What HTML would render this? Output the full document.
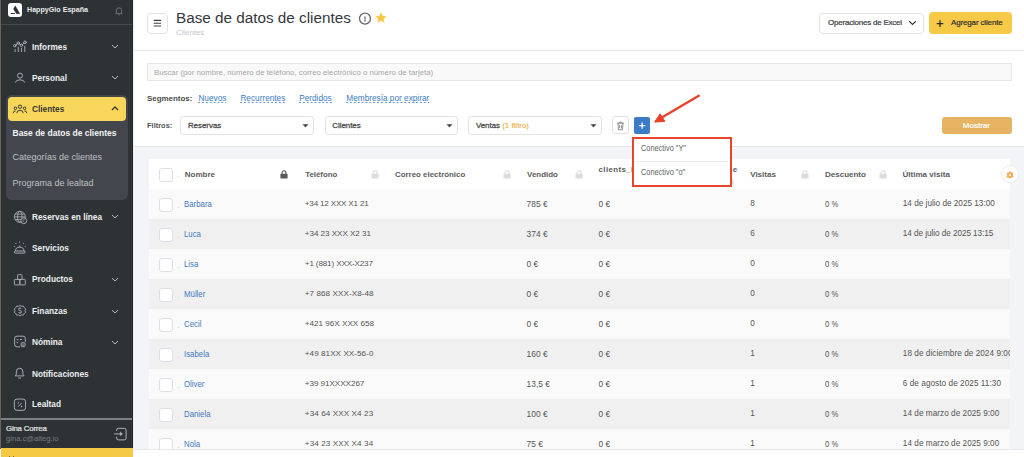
<!DOCTYPE html><html><head><meta charset="utf-8"><style>
html,body{margin:0;padding:0;}
body{width:1024px;height:457px;overflow:hidden;position:relative;background:#fff;font-family:"Liberation Sans",sans-serif;}
.t{position:absolute;line-height:1;white-space:nowrap;}
svg{overflow:visible}
</style></head><body>
<div style="position:absolute;left:0px;top:0px;width:133px;height:457px;background:#2d3234;"></div>
<div style="position:absolute;left:0px;top:0px;width:1px;height:457px;background:#6f625a;"></div>
<div style="position:absolute;left:132px;top:0px;width:1px;height:457px;background:#25282b;"></div>
<div style="position:absolute;left:8px;top:3px;width:14px;height:14px;background:#fff;border-radius:3px;"></div>
<svg style="position:absolute;left:8px;top:3px;" width="14" height="14" viewBox="0 0 14 14"><path d="M7.3 2.7 L11.9 10.7 L8.5 10.7 L5.4 6.1 Z" fill="#2c3034" stroke="#2c3034" stroke-width="0.3" stroke-linejoin="round"/><rect x="2.7" y="9.9" width="4.2" height="1" rx="0.4" fill="#2c3034"/></svg>
<div class="t" style="left:27px;top:6.86px;font-size:7.13px;color:#e9eaeb;font-weight:700;">HappyGio España</div>
<svg style="position:absolute;left:114px;top:5.5px;" width="10" height="10" viewBox="0 0 10 10"><path d="M2.4 7 L2.4 4.4 A2.6 2.6 0 0 1 7.6 4.4 L7.6 7 L8.3 7.7 L1.7 7.7 Z" fill="none" stroke="#7d8185" stroke-width="0.8" stroke-linejoin="round"/><path d="M4.3 8.7 L5.7 8.7" stroke="#7d8185" stroke-width="0.8"/></svg>
<div style="position:absolute;left:1px;top:24px;width:131px;height:1px;background:#44484c;"></div>
<svg style="position:absolute;left:12px;top:40px;" width="16" height="13" viewBox="0 0 16 13"><g fill="none" stroke="#b6b9bd" stroke-width="0.9" stroke-linecap="round">
<path d="M3.8 5.1 L5.2 3.8 M7.3 3.8 L8.4 4.6 M10.4 4.5 L11.9 3.1"/>
<circle cx="2.75" cy="5.7" r="1.2"/><circle cx="6.27" cy="3.1" r="1.2"/><circle cx="9.42" cy="5.3" r="1.2"/><circle cx="12.95" cy="2.35" r="1.3"/>
<path d="M3.1 9.5 V11.6 M6.27 7.2 V11.6 M9.42 8.1 V11.6 M12.8 6.4 V11.6"/></g></svg>
<div class="t" style="left:32px;top:42.71px;font-size:9.2px;color:#eeeff0;font-weight:700;transform:scaleX(0.902);transform-origin:0 0;">Informes</div>
<svg style="position:absolute;left:111px;top:44.4px;" width="8" height="5" viewBox="0 0 8 5"><path d="M1 1 L4 4 L7 1" fill="none" stroke="#b9bcbf" stroke-width="1"/></svg>
<svg style="position:absolute;left:13px;top:72px;" width="14" height="12" viewBox="0 0 14 12"><g fill="none" stroke="#b6b9bd" stroke-width="0.9"><circle cx="7" cy="3.6" r="2.5"/><path d="M2.3 10.6 Q2.8 7.8 7 7.8 Q11.2 7.8 11.7 10.6"/></g></svg>
<div class="t" style="left:32px;top:73.71px;font-size:9.2px;color:#eeeff0;font-weight:700;transform:scaleX(0.902);transform-origin:0 0;">Personal</div>
<svg style="position:absolute;left:111px;top:75.4px;" width="8" height="5" viewBox="0 0 8 5"><path d="M1 1 L4 4 L7 1" fill="none" stroke="#b9bcbf" stroke-width="1"/></svg>
<div style="position:absolute;left:6px;top:95px;width:122px;height:105px;background:#43474d;border-radius:6px;"></div>
<div style="position:absolute;left:8px;top:97.3px;width:118.3px;height:24px;background:#f7d65a;border-radius:4px;"></div>
<svg style="position:absolute;left:12px;top:103px;" width="16" height="12" viewBox="0 0 16 12"><g fill="none" stroke="#3b3a33" stroke-width="1"><circle cx="8" cy="3.7" r="1.7"/><circle cx="3.4" cy="5.3" r="1.3"/><circle cx="12.6" cy="5.3" r="1.3"/>
<path d="M4.8 10.2 Q4.8 7.3 8 7.3 Q11.2 7.3 11.2 10.2"/><path d="M1.2 10.2 Q1.4 7.9 3.6 7.9"/><path d="M14.8 10.2 Q14.6 7.9 12.4 7.9"/></g></svg>
<div class="t" style="left:32px;top:104.71px;font-size:9.2px;color:#38372f;font-weight:700;transform:scaleX(0.902);transform-origin:0 0;">Clientes</div>
<svg style="position:absolute;left:111px;top:106.3px;" width="8" height="5" viewBox="0 0 8 5"><path d="M1 4 L4 1 L7 4" fill="none" stroke="#3b3a33" stroke-width="1.25"/></svg>
<div class="t" style="left:12.5px;top:128.70px;font-size:8.5px;color:#f4f4f5;font-weight:700;">Base de datos de clientes</div>
<div class="t" style="left:12.5px;top:152.68px;font-size:9px;color:#bdc0c4;font-weight:400;">Categorías de clientes</div>
<div class="t" style="left:12.5px;top:178.98px;font-size:9px;color:#bdc0c4;font-weight:400;">Programa de lealtad</div>
<svg style="position:absolute;left:12px;top:209px;" width="16" height="16" viewBox="0 0 16 16"><g fill="none" stroke="#b6b9bd" stroke-width="0.8"><circle cx="7.85" cy="7.85" r="5.5"/><ellipse cx="7.85" cy="7.85" rx="2.3" ry="5.5"/><path d="M2.35 7.85 H13.35 M3.2 5.1 H12.5 M3.2 10.6 H9.5"/></g>
<circle cx="11.8" cy="11.8" r="2.9" fill="#2d3234" stroke="#b6b9bd" stroke-width="0.8"/><path d="M12.6 10.7 Q11 10.5 10.9 11.9 Q11 13 12.3 12.9" fill="none" stroke="#b6b9bd" stroke-width="0.6"/></svg>
<div class="t" style="left:32px;top:212.51px;font-size:9.2px;color:#eeeff0;font-weight:700;transform:scaleX(0.902);transform-origin:0 0;">Reservas en línea</div>
<svg style="position:absolute;left:111px;top:214.20000000000002px;" width="8" height="5" viewBox="0 0 8 5"><path d="M1 1 L4 4 L7 1" fill="none" stroke="#b9bcbf" stroke-width="1"/></svg>
<svg style="position:absolute;left:12px;top:240px;" width="16" height="15" viewBox="0 0 16 15"><g fill="none" stroke="#b6b9bd" stroke-width="0.9"><path d="M3.5 11 Q3.5 7.2 7.7 7.2 Q11.9 7.2 11.9 11"/><rect x="2.4" y="11" width="10.8" height="2.1" rx="1.05"/><path d="M6.9 6.2 H8.5"/></g><g fill="#b6b9bd"><circle cx="7.7" cy="2.1" r="0.55"/><circle cx="3.9" cy="3.5" r="0.55"/><circle cx="11.6" cy="3.5" r="0.55"/><circle cx="2.3" cy="6.5" r="0.55"/><circle cx="13.2" cy="6.5" r="0.55"/></g></svg>
<div class="t" style="left:32px;top:243.91px;font-size:9.2px;color:#eeeff0;font-weight:700;transform:scaleX(0.902);transform-origin:0 0;">Servicios</div>
<svg style="position:absolute;left:12px;top:272px;" width="16" height="15" viewBox="0 0 16 15"><g fill="none" stroke="#b6b9bd" stroke-width="0.85"><rect x="5.6" y="2.6" width="4.4" height="4.8" rx="0.7"/><rect x="2.4" y="7.4" width="5.45" height="5.5" rx="0.7"/><rect x="7.85" y="7.4" width="5.45" height="5.5" rx="0.7"/></g></svg>
<div class="t" style="left:32px;top:275.41px;font-size:9.2px;color:#eeeff0;font-weight:700;transform:scaleX(0.902);transform-origin:0 0;">Productos</div>
<svg style="position:absolute;left:111px;top:277.09999999999997px;" width="8" height="5" viewBox="0 0 8 5"><path d="M1 1 L4 4 L7 1" fill="none" stroke="#b9bcbf" stroke-width="1"/></svg>
<svg style="position:absolute;left:12px;top:302.9px;" width="16" height="16" viewBox="0 0 16 16"><g fill="none" stroke="#b6b9bd" stroke-width="0.9" transform="translate(8,7.7) scale(0.92) translate(-8,-7.7)"><path d="M8 2 L9.6 2.9 L11.6 2.7 L12.5 4.4 L14.1 5.6 L13.6 7.6 L14.1 9.6 L12.5 10.8 L11.6 12.5 L9.6 12.3 L8 13.4 L6.4 12.3 L4.4 12.5 L3.5 10.8 L1.9 9.6 L2.4 7.6 L1.9 5.6 L3.5 4.4 L4.4 2.7 L6.4 2.9 Z" stroke-linejoin="round"/>
<path d="M9.6 5.9 Q9.2 5 8 5 Q6.4 5 6.4 6.3 Q6.4 7.3 8 7.6 Q9.7 7.9 9.7 9 Q9.7 10.2 8 10.2 Q6.7 10.2 6.3 9.3 M8 4.2 V5 M8 10.2 V11"/></g></svg>
<div class="t" style="left:32px;top:307.01px;font-size:9.2px;color:#eeeff0;font-weight:700;transform:scaleX(0.902);transform-origin:0 0;">Finanzas</div>
<svg style="position:absolute;left:111px;top:308.7px;" width="8" height="5" viewBox="0 0 8 5"><path d="M1 1 L4 4 L7 1" fill="none" stroke="#b9bcbf" stroke-width="1"/></svg>
<svg style="position:absolute;left:12px;top:334px;" width="16" height="15" viewBox="0 0 16 15"><g fill="none" stroke="#b6b9bd" stroke-width="0.9"><path d="M8 12.85 H5 Q2.65 12.85 2.65 10.5 V4.5 Q2.65 2.15 5 2.15 H11 Q13.35 2.15 13.35 4.5 V8"/><path d="M4.6 5.6 L5.3 6.1 L6.4 5 M4.6 8.3 L5.3 8.8 L6.4 7.7 M7.9 5.5 H10"/><rect x="9.15" y="8.75" width="3.9" height="3.9" rx="0.9"/><path d="M10 10.1 H12.2 M10 11.4 H12.2" stroke-width="0.6"/></g></svg>
<div class="t" style="left:32px;top:338.21px;font-size:9.2px;color:#eeeff0;font-weight:700;transform:scaleX(0.902);transform-origin:0 0;">Nómina</div>
<svg style="position:absolute;left:111px;top:339.9px;" width="8" height="5" viewBox="0 0 8 5"><path d="M1 1 L4 4 L7 1" fill="none" stroke="#b9bcbf" stroke-width="1"/></svg>
<svg style="position:absolute;left:12px;top:366px;" width="16" height="15" viewBox="0 0 16 15"><g fill="none" stroke="#b6b9bd" stroke-width="0.9" stroke-linejoin="round"><path d="M4.3 8.4 V5.9 Q4.3 2.2 7.6 2.2 Q10.9 2.2 10.9 5.9 V8.4 L12.1 9.9 H3.1 Z"/><path d="M6.6 12 H8.6" stroke-linecap="round"/></g></svg>
<div class="t" style="left:32px;top:369.71px;font-size:9.2px;color:#eeeff0;font-weight:700;transform:scaleX(0.902);transform-origin:0 0;">Notificaciones</div>
<svg style="position:absolute;left:12px;top:397px;" width="16" height="15" viewBox="0 0 16 15"><g fill="none" stroke="#b6b9bd" stroke-width="0.9"><rect x="2.35" y="2.05" width="11.2" height="11.3" rx="2.6"/><path d="M6.2 9.5 L9.7 6"/></g><circle cx="6.3" cy="5.9" r="0.7" fill="#b6b9bd"/><circle cx="9.6" cy="9.5" r="0.7" fill="#b6b9bd"/></svg>
<div class="t" style="left:32px;top:400.21px;font-size:9.2px;color:#eeeff0;font-weight:700;transform:scaleX(0.902);transform-origin:0 0;">Lealtad</div>
<div style="position:absolute;left:1px;top:418px;width:131px;height:2px;background:#7d8187;"></div>
<div class="t" style="left:6px;top:425.01px;font-size:7.9px;color:#e6e7e8;font-weight:400;letter-spacing:-0.22px;-webkit-text-stroke:0.2px #e6e7e8;">Gina Correa</div>
<div class="t" style="left:6px;top:434.87px;font-size:7.6px;color:#787c82;font-weight:400;">gina.c@alteg.io</div>
<svg style="position:absolute;left:112px;top:426px;" width="16" height="16" viewBox="0 0 16 16"><g fill="none" stroke="#b6b9bd" stroke-width="0.95"><path d="M4.6 5.1 V4.1 Q4.6 2.3 6.4 2.3 H12.3 Q14.1 2.3 14.1 4.1 V12.1 Q14.1 13.9 12.3 13.9 H6.4 Q4.6 13.9 4.6 12.1 V10.7"/><path d="M2.2 7.9 H9"/></g><path d="M8.3 6 L10.6 7.9 L8.3 9.8 Z" fill="#b6b9bd" stroke="#b6b9bd" stroke-width="0.4" stroke-linejoin="round"/></svg>
<div style="position:absolute;left:1px;top:448px;width:132px;height:9px;background:#f5c944;"></div>
<div style="position:absolute;left:133px;top:0px;width:1px;height:449px;background:#ebecf3;"></div>
<div style="position:absolute;left:147px;top:12.5px;width:21px;height:21px;background:#fff;border:1px solid #dfe2ea;border-radius:4px;box-sizing:border-box;"></div>
<svg style="position:absolute;left:152px;top:19px;" width="11" height="8" viewBox="0 0 11 8"><path d="M1.7 1.3 H9.1 M1.7 4.2 H9.1 M1.7 7 H9.1" stroke="#3d4045" stroke-width="1.15"/></svg>
<div class="t" style="left:176px;top:9.67px;font-size:15.28px;color:#35383d;font-weight:400;">Base de datos de clientes</div>
<div class="t" style="left:176px;top:29.20px;font-size:7.8px;color:#c3c6ce;font-weight:400;">Clientes</div>
<svg style="position:absolute;left:358px;top:11.5px;" width="14" height="14" viewBox="0 0 14 14"><circle cx="7" cy="6.6" r="5.5" fill="none" stroke="#61656c" stroke-width="1.3"/><path d="M7 4.6 V9.2" stroke="#61656c" stroke-width="1.1"/><path d="M6.3 4.8 H7.2 M6.3 9.1 H7.7" stroke="#61656c" stroke-width="0.5"/></svg>
<svg style="position:absolute;left:375px;top:12.3px;" width="12" height="12" viewBox="0 0 12 12"><path d="M6 0.6 L7.6 4 L11.3 4.4 L8.5 6.9 L9.3 10.5 L6 8.6 L2.7 10.5 L3.5 6.9 L0.7 4.4 L4.4 4 Z" fill="#f5c73e" stroke="#f5c73e" stroke-width="0.3" stroke-linejoin="round"/></svg>
<div style="position:absolute;left:819px;top:12.5px;width:105px;height:21px;background:#fff;border:1px solid #dfe2ea;border-radius:4px;box-sizing:border-box;"></div>
<div class="t" style="left:828px;top:19.13px;font-size:8px;color:#393c41;font-weight:400;letter-spacing:-0.22px;-webkit-text-stroke:0.2px #393c41;">Operaciones de Excel</div>
<svg style="position:absolute;left:908px;top:20px;" width="9" height="6" viewBox="0 0 9 6"><path d="M1.2 1.2 L4.5 4.4 L7.8 1.2" fill="none" stroke="#393c41" stroke-width="1.2"/></svg>
<div style="position:absolute;left:929px;top:12px;width:83px;height:22px;background:#f6ca47;border-radius:4px;"></div>
<svg style="position:absolute;left:935px;top:18.5px;" width="10" height="9" viewBox="0 0 10 9"><path d="M5 1.3 V8 M1.7 4.6 H8.3" stroke="#2f2f2c" stroke-width="1.3"/></svg>
<div class="t" style="left:951px;top:19.13px;font-size:8px;color:#2f2f2c;font-weight:400;letter-spacing:-0.15px;-webkit-text-stroke:0.2px #2f2f2c;">Agregar cliente</div>
<div style="position:absolute;left:134px;top:50px;width:890px;height:1px;background:#e5e7ec;"></div>
<div style="position:absolute;left:147px;top:63px;width:865px;height:18px;background:#f9f9f9;border:1px solid #e6e6e6;box-sizing:border-box;"></div>
<div class="t" style="left:154px;top:68.99px;font-size:7.81px;color:#a8a8a8;font-weight:400;">Buscar (por nombre, número de teléfono, correo electrónico o número de tarjeta)</div>
<div class="t" style="left:147px;top:94.89px;font-size:7.93px;color:#4c4c4c;font-weight:700;">Segmentos:</div>
<div class="t" style="left:198.4px;top:94.51px;font-size:8.26px;color:#3b7ac2;font-weight:400;">Nuevos</div>
<div style="position:absolute;left:198.4px;top:102.4px;width:28.0px;height:1px;background-image:linear-gradient(to right,#6d9ad6 55%,transparent 55%);background-size:3.9px 1px;background-repeat:repeat-x;"></div>
<div class="t" style="left:240.4px;top:94.51px;font-size:8.26px;color:#3b7ac2;font-weight:400;">Recurrentes</div>
<div style="position:absolute;left:240.4px;top:102.4px;width:45.0px;height:1px;background-image:linear-gradient(to right,#6d9ad6 55%,transparent 55%);background-size:3.9px 1px;background-repeat:repeat-x;"></div>
<div class="t" style="left:299.2px;top:94.51px;font-size:8.26px;color:#3b7ac2;font-weight:400;">Perdidos</div>
<div style="position:absolute;left:299.2px;top:102.4px;width:32.6px;height:1px;background-image:linear-gradient(to right,#6d9ad6 55%,transparent 55%);background-size:3.9px 1px;background-repeat:repeat-x;"></div>
<div class="t" style="left:346.3px;top:94.51px;font-size:8.26px;color:#3b7ac2;font-weight:400;">Membresía por expirar</div>
<div style="position:absolute;left:346.3px;top:102.4px;width:83.1px;height:1px;background-image:linear-gradient(to right,#6d9ad6 55%,transparent 55%);background-size:3.9px 1px;background-repeat:repeat-x;"></div>
<div class="t" style="left:147px;top:121.88px;font-size:7.47px;color:#555;font-weight:700;">Filtros:</div>
<div style="position:absolute;left:180.3px;top:116px;width:133.7px;height:18.5px;background:#fff;border:1px solid #e3e3e3;border-radius:3px;box-sizing:border-box;"></div>
<div class="t" style="left:187.9px;top:122.01px;font-size:7.9px;color:#505050;font-weight:400;-webkit-text-stroke:0.3px #505050;">Reservas</div>
<svg style="position:absolute;left:301.7px;top:124px;" width="7" height="4" viewBox="0 0 7 4"><path d="M0.5 0.3 H6.5 L3.5 3.6 Z" fill="#4a4a4a"/></svg>
<div style="position:absolute;left:324.6px;top:116px;width:133.39999999999998px;height:18.5px;background:#fff;border:1px solid #e3e3e3;border-radius:3px;box-sizing:border-box;"></div>
<div class="t" style="left:332.20000000000005px;top:122.01px;font-size:7.9px;color:#505050;font-weight:400;-webkit-text-stroke:0.3px #505050;">Clientes</div>
<svg style="position:absolute;left:445.7px;top:124px;" width="7" height="4" viewBox="0 0 7 4"><path d="M0.5 0.3 H6.5 L3.5 3.6 Z" fill="#4a4a4a"/></svg>
<div style="position:absolute;left:468.3px;top:116px;width:133.7px;height:18.5px;background:#fff;border:1px solid #e3e3e3;border-radius:3px;box-sizing:border-box;"></div>
<div class="t" style="left:475.90000000000003px;top:122.01px;font-size:7.9px;color:#505050;font-weight:400;-webkit-text-stroke:0.3px #505050;">Ventas <span style="color:#e9a93b;-webkit-text-stroke:0.1px #e9a93b;">(1 filtro)</span></div>
<svg style="position:absolute;left:589.7px;top:124px;" width="7" height="4" viewBox="0 0 7 4"><path d="M0.5 0.3 H6.5 L3.5 3.6 Z" fill="#4a4a4a"/></svg>
<div style="position:absolute;left:612px;top:116.4px;width:16.5px;height:18px;background:#fff;border:1px solid #e0e0e0;border-radius:3px;box-sizing:border-box;"></div>
<svg style="position:absolute;left:616px;top:121.2px;" width="9" height="10" viewBox="0 0 9 10"><g fill="none" stroke="#777" stroke-width="0.8"><path d="M1 2.2 H8 M3.2 2.2 V1.2 H5.8 V2.2 M2 2.2 L2.4 8.8 H6.6 L7 2.2 M3.6 3.8 V7.4 M5.4 3.8 V7.4"/></g></svg>
<div style="position:absolute;left:634.2px;top:116.8px;width:15.5px;height:17.1px;background:#3b7cc6;border-radius:2px;"></div>
<svg style="position:absolute;left:637px;top:120px;" width="11" height="11" viewBox="0 0 11 11"><path d="M5.1 2.6 V8.8 M2 5.7 H8.3" stroke="#fff" stroke-width="1.3"/></svg>
<div style="position:absolute;left:941.8px;top:116.6px;width:69.9px;height:17.7px;background:#e5b361;border-radius:3px;"></div>
<div class="t" style="left:962.8px;top:121.70px;font-size:8.03px;color:#fff;font-weight:400;-webkit-text-stroke:0.2px #fff;">Mostrar</div>
<div style="position:absolute;left:134px;top:146px;width:890px;height:1px;background:#e6e7ec;"></div>
<div style="position:absolute;left:134px;top:147px;width:890px;height:302px;background:#f3f4f8;"></div>
<div style="position:absolute;left:0px;top:449px;width:1024px;height:8px;background:#fff;"></div>
<div style="position:absolute;left:133px;top:449px;width:891px;height:1px;background:#e8e8ea;"></div>
<div style="position:absolute;left:1px;top:448px;width:132px;height:9px;background:#f5c944;"></div>
<div style="position:absolute;left:8.6px;top:455.8px;width:1.6px;height:1.2px;background:#6b5a2a;border-radius:1px 1px 0 0;"></div>
<div style="position:absolute;left:12.6px;top:455.8px;width:1.8px;height:1.2px;background:#6b5a2a;border-radius:1px 1px 0 0;"></div>
<div style="position:absolute;left:149px;top:159px;width:861px;height:30px;background:#fff;"></div>
<div style="position:absolute;left:159px;top:167.9px;width:13.8px;height:13.8px;background:#fff;border:1.2px solid #dcdfe8;border-radius:3px;box-sizing:border-box;"></div>
<div style="position:absolute;left:178px;top:176px;width:1px;height:1px;background:#d8d8d8;"></div>
<div class="t" style="left:184.8px;top:170.93px;font-size:8px;color:#5b5b5b;font-weight:700;">Nombre</div>
<svg style="position:absolute;left:280.2px;top:169.8px;" width="8" height="9" viewBox="0 0 8 9"><path d="M2.1 4 V2.9 Q2.1 0.7 4 0.7 Q5.9 0.7 5.9 2.9 V4" fill="none" stroke="#5a5a5a" stroke-width="1.1"/><rect x="0.4" y="3.7" width="7.2" height="4.9" rx="0.9" fill="#5a5a5a"/></svg>
<div class="t" style="left:305.2px;top:171.04px;font-size:7.87px;color:#5b5b5b;font-weight:700;">Teléfono</div>
<svg style="position:absolute;left:370.5px;top:170px;" width="8" height="9" viewBox="0 0 8 9"><path d="M2.1 4 V2.9 Q2.1 0.7 4 0.7 Q5.9 0.7 5.9 2.9 V4" fill="none" stroke="#dcdcdc" stroke-width="1.1"/><rect x="0.4" y="3.7" width="7.2" height="4.9" rx="0.9" fill="#dcdcdc"/></svg>
<div class="t" style="left:395px;top:171.00px;font-size:7.91px;color:#5b5b5b;font-weight:700;">Correo electrónico</div>
<svg style="position:absolute;left:502.5px;top:170px;" width="8" height="9" viewBox="0 0 8 9"><path d="M2.1 4 V2.9 Q2.1 0.7 4 0.7 Q5.9 0.7 5.9 2.9 V4" fill="none" stroke="#dcdcdc" stroke-width="1.1"/><rect x="0.4" y="3.7" width="7.2" height="4.9" rx="0.9" fill="#dcdcdc"/></svg>
<div class="t" style="left:527px;top:170.95px;font-size:7.97px;color:#5b5b5b;font-weight:700;">Vendido</div>
<svg style="position:absolute;left:574.5px;top:170px;" width="8" height="9" viewBox="0 0 8 9"><path d="M2.1 4 V2.9 Q2.1 0.7 4 0.7 Q5.9 0.7 5.9 2.9 V4" fill="none" stroke="#dcdcdc" stroke-width="1.1"/><rect x="0.4" y="3.7" width="7.2" height="4.9" rx="0.9" fill="#dcdcdc"/></svg>
<div class="t" style="left:598.6px;top:165.51px;font-size:7.9px;color:#5b5b5b;font-weight:700;letter-spacing:0.38px;">clients_balance_account_balance</div>
<svg style="position:absolute;left:725.5px;top:175.5px;" width="8" height="9" viewBox="0 0 8 9"><path d="M2.1 4 V2.9 Q2.1 0.7 4 0.7 Q5.9 0.7 5.9 2.9 V4" fill="none" stroke="#dcdcdc" stroke-width="1.1"/><rect x="0.4" y="3.7" width="7.2" height="4.9" rx="0.9" fill="#dcdcdc"/></svg>
<div class="t" style="left:750.2px;top:170.91px;font-size:8.02px;color:#5b5b5b;font-weight:700;">Visitas</div>
<svg style="position:absolute;left:800.5px;top:170px;" width="8" height="9" viewBox="0 0 8 9"><path d="M2.1 4 V2.9 Q2.1 0.7 4 0.7 Q5.9 0.7 5.9 2.9 V4" fill="none" stroke="#dcdcdc" stroke-width="1.1"/><rect x="0.4" y="3.7" width="7.2" height="4.9" rx="0.9" fill="#dcdcdc"/></svg>
<div class="t" style="left:825px;top:170.93px;font-size:8px;color:#5b5b5b;font-weight:700;">Descuento</div>
<svg style="position:absolute;left:878.5px;top:170px;" width="8" height="9" viewBox="0 0 8 9"><path d="M2.1 4 V2.9 Q2.1 0.7 4 0.7 Q5.9 0.7 5.9 2.9 V4" fill="none" stroke="#dcdcdc" stroke-width="1.1"/><rect x="0.4" y="3.7" width="7.2" height="4.9" rx="0.9" fill="#dcdcdc"/></svg>
<div class="t" style="left:902.5px;top:170.88px;font-size:8.06px;color:#5b5b5b;font-weight:700;">Última visita</div>
<div style="position:absolute;left:1000.5px;top:165px;width:18px;height:18px;background:#fff;border:1px solid #ededed;border-radius:50%;box-sizing:border-box;"></div>
<svg style="position:absolute;left:1005.5px;top:170.5px;" width="8" height="8" viewBox="0 0 8 8"><g fill="#f2ab50"><circle cx="4.00" cy="1.70" r="1.25"/><circle cx="5.99" cy="2.85" r="1.25"/><circle cx="5.99" cy="5.15" r="1.25"/><circle cx="4.00" cy="6.30" r="1.25"/><circle cx="2.01" cy="5.15" r="1.25"/><circle cx="2.01" cy="2.85" r="1.25"/><circle cx="4" cy="4" r="2.3"/></g><circle cx="4" cy="4" r="1" fill="#fff"/></svg>
<div style="position:absolute;left:0;top:0;width:1024px;height:449px;overflow:hidden;">
<div style="position:absolute;left:149px;top:189px;width:861px;height:30px;background:#fafafa;"></div>
<div style="position:absolute;left:159px;top:198.3px;width:13.8px;height:13.8px;background:#fff;border:1.2px solid #dcdfe8;border-radius:3px;box-sizing:border-box;"></div>
<div style="position:absolute;left:178px;top:206.5px;width:1px;height:1px;background:#dadada;"></div>
<div class="t" style="left:184.4px;top:200.25px;font-size:8.8px;color:#4379c0;font-weight:400;transform:scaleX(0.89);transform-origin:0 0;">Barbara</div>
<div class="t" style="left:304.8px;top:200.34px;font-size:8.1px;color:#555555;font-weight:400;letter-spacing:-0.192px;">+34 12 XXX X1 21</div>
<div class="t" style="left:526.6px;top:199.59px;font-size:8.4px;color:#555555;font-weight:400;">785 €</div>
<div class="t" style="left:598.6px;top:200.17px;font-size:8.3px;color:#555555;font-weight:400;">0 €</div>
<div class="t" style="left:750.2px;top:200.26px;font-size:8.2px;color:#555555;font-weight:400;">8</div>
<div class="t" style="left:825px;top:200.17px;font-size:8.3px;color:#555555;font-weight:400;transform:scaleX(0.93);transform-origin:0 0;">0 %</div>
<div style="position:absolute;left:149px;top:189px;width:861px;height:30px;overflow:hidden;"><div class="t" style="left:753.8px;top:11.26px;font-size:8.2px;color:#555555;font-weight:400;letter-spacing:0.0px;">14 de julio de 2025 13:00</div>
</div><div style="position:absolute;left:149px;top:219px;width:861px;height:30px;background:#f0f0f0;"></div>
<div style="position:absolute;left:159px;top:228.3px;width:13.8px;height:13.8px;background:#fff;border:1.2px solid #dcdfe8;border-radius:3px;box-sizing:border-box;"></div>
<div style="position:absolute;left:178px;top:236.5px;width:1px;height:1px;background:#dadada;"></div>
<div class="t" style="left:184.4px;top:230.25px;font-size:8.8px;color:#4379c0;font-weight:400;transform:scaleX(0.89);transform-origin:0 0;">Luca</div>
<div class="t" style="left:304.8px;top:230.34px;font-size:8.1px;color:#555555;font-weight:400;letter-spacing:-0.045px;">+34 23 XXX X2 31</div>
<div class="t" style="left:526.6px;top:229.59px;font-size:8.4px;color:#555555;font-weight:400;">374 €</div>
<div class="t" style="left:598.6px;top:230.17px;font-size:8.3px;color:#555555;font-weight:400;">0 €</div>
<div class="t" style="left:750.2px;top:230.26px;font-size:8.2px;color:#555555;font-weight:400;">6</div>
<div class="t" style="left:825px;top:230.17px;font-size:8.3px;color:#555555;font-weight:400;transform:scaleX(0.93);transform-origin:0 0;">0 %</div>
<div style="position:absolute;left:149px;top:219px;width:861px;height:30px;overflow:hidden;"><div class="t" style="left:753.8px;top:11.26px;font-size:8.2px;color:#555555;font-weight:400;letter-spacing:-0.058px;">14 de julio de 2025 13:15</div>
</div><div style="position:absolute;left:149px;top:249px;width:861px;height:30px;background:#fafafa;"></div>
<div style="position:absolute;left:159px;top:258.3px;width:13.8px;height:13.8px;background:#fff;border:1.2px solid #dcdfe8;border-radius:3px;box-sizing:border-box;"></div>
<div style="position:absolute;left:178px;top:266.5px;width:1px;height:1px;background:#dadada;"></div>
<div class="t" style="left:184.4px;top:260.25px;font-size:8.8px;color:#4379c0;font-weight:400;transform:scaleX(0.89);transform-origin:0 0;">Lisa</div>
<div class="t" style="left:304.8px;top:260.34px;font-size:8.1px;color:#555555;font-weight:400;letter-spacing:-0.142px;">+1 (881) XXX-X237</div>
<div class="t" style="left:526.6px;top:259.59px;font-size:8.4px;color:#555555;font-weight:400;">0 €</div>
<div class="t" style="left:598.6px;top:260.17px;font-size:8.3px;color:#555555;font-weight:400;">0 €</div>
<div class="t" style="left:750.2px;top:260.26px;font-size:8.2px;color:#555555;font-weight:400;">0</div>
<div class="t" style="left:825px;top:260.17px;font-size:8.3px;color:#555555;font-weight:400;transform:scaleX(0.93);transform-origin:0 0;">0 %</div>
<div style="position:absolute;left:149px;top:279px;width:861px;height:30px;background:#f0f0f0;"></div>
<div style="position:absolute;left:159px;top:288.3px;width:13.8px;height:13.8px;background:#fff;border:1.2px solid #dcdfe8;border-radius:3px;box-sizing:border-box;"></div>
<div style="position:absolute;left:178px;top:296.5px;width:1px;height:1px;background:#dadada;"></div>
<div class="t" style="left:184.4px;top:290.25px;font-size:8.8px;color:#4379c0;font-weight:400;transform:scaleX(0.89);transform-origin:0 0;">Müller</div>
<div class="t" style="left:304.8px;top:290.34px;font-size:8.1px;color:#555555;font-weight:400;letter-spacing:0.069px;">+7 868 XXX-X8-48</div>
<div class="t" style="left:526.6px;top:289.59px;font-size:8.4px;color:#555555;font-weight:400;">0 €</div>
<div class="t" style="left:598.6px;top:290.17px;font-size:8.3px;color:#555555;font-weight:400;">0 €</div>
<div class="t" style="left:750.2px;top:290.26px;font-size:8.2px;color:#555555;font-weight:400;">0</div>
<div class="t" style="left:825px;top:290.17px;font-size:8.3px;color:#555555;font-weight:400;transform:scaleX(0.93);transform-origin:0 0;">0 %</div>
<div style="position:absolute;left:149px;top:309px;width:861px;height:30px;background:#fafafa;"></div>
<div style="position:absolute;left:159px;top:318.3px;width:13.8px;height:13.8px;background:#fff;border:1.2px solid #dcdfe8;border-radius:3px;box-sizing:border-box;"></div>
<div style="position:absolute;left:178px;top:326.5px;width:1px;height:1px;background:#dadada;"></div>
<div class="t" style="left:184.4px;top:320.25px;font-size:8.8px;color:#4379c0;font-weight:400;transform:scaleX(0.89);transform-origin:0 0;">Cecil</div>
<div class="t" style="left:304.8px;top:320.34px;font-size:8.1px;color:#555555;font-weight:400;letter-spacing:0.011px;">+421 96X XXX 658</div>
<div class="t" style="left:526.6px;top:319.59px;font-size:8.4px;color:#555555;font-weight:400;">0 €</div>
<div class="t" style="left:598.6px;top:320.17px;font-size:8.3px;color:#555555;font-weight:400;">0 €</div>
<div class="t" style="left:750.2px;top:320.26px;font-size:8.2px;color:#555555;font-weight:400;">0</div>
<div class="t" style="left:825px;top:320.17px;font-size:8.3px;color:#555555;font-weight:400;transform:scaleX(0.93);transform-origin:0 0;">0 %</div>
<div style="position:absolute;left:149px;top:339px;width:861px;height:30px;background:#f0f0f0;"></div>
<div style="position:absolute;left:159px;top:348.3px;width:13.8px;height:13.8px;background:#fff;border:1.2px solid #dcdfe8;border-radius:3px;box-sizing:border-box;"></div>
<div style="position:absolute;left:178px;top:356.5px;width:1px;height:1px;background:#dadada;"></div>
<div class="t" style="left:184.4px;top:350.25px;font-size:8.8px;color:#4379c0;font-weight:400;transform:scaleX(0.89);transform-origin:0 0;">Isabela</div>
<div class="t" style="left:304.8px;top:350.34px;font-size:8.1px;color:#555555;font-weight:400;letter-spacing:0.062px;">+49 81XX XX-56-0</div>
<div class="t" style="left:526.6px;top:349.59px;font-size:8.4px;color:#555555;font-weight:400;">160 €</div>
<div class="t" style="left:598.6px;top:350.17px;font-size:8.3px;color:#555555;font-weight:400;">0 €</div>
<div class="t" style="left:750.2px;top:350.26px;font-size:8.2px;color:#555555;font-weight:400;">1</div>
<div class="t" style="left:825px;top:350.17px;font-size:8.3px;color:#555555;font-weight:400;transform:scaleX(0.93);transform-origin:0 0;">0 %</div>
<div style="position:absolute;left:149px;top:339px;width:861px;height:30px;overflow:hidden;"><div class="t" style="left:753.8px;top:11.26px;font-size:8.2px;color:#555555;font-weight:400;letter-spacing:0.05px;">18 de diciembre de 2024 9:00</div>
</div><div style="position:absolute;left:149px;top:369px;width:861px;height:30px;background:#fafafa;"></div>
<div style="position:absolute;left:159px;top:378.3px;width:13.8px;height:13.8px;background:#fff;border:1.2px solid #dcdfe8;border-radius:3px;box-sizing:border-box;"></div>
<div style="position:absolute;left:178px;top:386.5px;width:1px;height:1px;background:#dadada;"></div>
<div class="t" style="left:184.4px;top:380.25px;font-size:8.8px;color:#4379c0;font-weight:400;transform:scaleX(0.89);transform-origin:0 0;">Oliver</div>
<div class="t" style="left:304.8px;top:380.34px;font-size:8.1px;color:#555555;font-weight:400;letter-spacing:-0.044px;">+39 91XXXX267</div>
<div class="t" style="left:526.6px;top:379.59px;font-size:8.4px;color:#555555;font-weight:400;">13,5 €</div>
<div class="t" style="left:598.6px;top:380.17px;font-size:8.3px;color:#555555;font-weight:400;">0 €</div>
<div class="t" style="left:750.2px;top:380.26px;font-size:8.2px;color:#555555;font-weight:400;">1</div>
<div class="t" style="left:825px;top:380.17px;font-size:8.3px;color:#555555;font-weight:400;transform:scaleX(0.93);transform-origin:0 0;">0 %</div>
<div style="position:absolute;left:149px;top:369px;width:861px;height:30px;overflow:hidden;"><div class="t" style="left:753.8px;top:11.26px;font-size:8.2px;color:#555555;font-weight:400;letter-spacing:0.056px;">6 de agosto de 2025 11:30</div>
</div><div style="position:absolute;left:149px;top:399px;width:861px;height:30px;background:#f0f0f0;"></div>
<div style="position:absolute;left:159px;top:408.3px;width:13.8px;height:13.8px;background:#fff;border:1.2px solid #dcdfe8;border-radius:3px;box-sizing:border-box;"></div>
<div style="position:absolute;left:178px;top:416.5px;width:1px;height:1px;background:#dadada;"></div>
<div class="t" style="left:184.4px;top:410.25px;font-size:8.8px;color:#4379c0;font-weight:400;transform:scaleX(0.89);transform-origin:0 0;">Daniela</div>
<div class="t" style="left:304.8px;top:410.34px;font-size:8.1px;color:#555555;font-weight:400;letter-spacing:0.102px;">+34 64 XXX X4 23</div>
<div class="t" style="left:526.6px;top:409.59px;font-size:8.4px;color:#555555;font-weight:400;">100 €</div>
<div class="t" style="left:598.6px;top:410.17px;font-size:8.3px;color:#555555;font-weight:400;">0 €</div>
<div class="t" style="left:750.2px;top:410.26px;font-size:8.2px;color:#555555;font-weight:400;">1</div>
<div class="t" style="left:825px;top:410.17px;font-size:8.3px;color:#555555;font-weight:400;transform:scaleX(0.93);transform-origin:0 0;">0 %</div>
<div style="position:absolute;left:149px;top:399px;width:861px;height:30px;overflow:hidden;"><div class="t" style="left:753.8px;top:11.26px;font-size:8.2px;color:#555555;font-weight:400;letter-spacing:0.038px;">14 de marzo de 2025 9:00</div>
</div><div style="position:absolute;left:149px;top:429px;width:861px;height:30px;background:#fafafa;"></div>
<div style="position:absolute;left:159px;top:438.3px;width:13.8px;height:13.8px;background:#fff;border:1.2px solid #dcdfe8;border-radius:3px;box-sizing:border-box;"></div>
<div style="position:absolute;left:178px;top:446.5px;width:1px;height:1px;background:#dadada;"></div>
<div class="t" style="left:184.4px;top:440.25px;font-size:8.8px;color:#4379c0;font-weight:400;transform:scaleX(0.89);transform-origin:0 0;">Nola</div>
<div class="t" style="left:304.8px;top:440.34px;font-size:8.1px;color:#555555;font-weight:400;letter-spacing:0.102px;">+34 23 XXX X4 34</div>
<div class="t" style="left:526.6px;top:439.59px;font-size:8.4px;color:#555555;font-weight:400;">75 €</div>
<div class="t" style="left:598.6px;top:440.17px;font-size:8.3px;color:#555555;font-weight:400;">0 €</div>
<div class="t" style="left:750.2px;top:440.26px;font-size:8.2px;color:#555555;font-weight:400;">1</div>
<div class="t" style="left:825px;top:440.17px;font-size:8.3px;color:#555555;font-weight:400;transform:scaleX(0.93);transform-origin:0 0;">0 %</div>
<div style="position:absolute;left:149px;top:429px;width:861px;height:30px;overflow:hidden;"><div class="t" style="left:753.8px;top:11.26px;font-size:8.2px;color:#555555;font-weight:400;letter-spacing:0.038px;">14 de marzo de 2025 9:00</div>
</div></div>
<div style="position:absolute;left:632.2px;top:137.2px;width:99.5px;height:50.3px;background:#fff;border:2.5px solid #e8452c;box-sizing:border-box;"></div>
<div style="position:absolute;left:634.8px;top:161px;width:94.4px;height:1px;background:#ededed;"></div>
<div class="t" style="left:640.5px;top:144.56px;font-size:8.2px;color:#626262;font-weight:400;transform:scaleX(0.9);transform-origin:0 0;">Conectivo "Y"</div>
<div class="t" style="left:640.5px;top:168.56px;font-size:8.2px;color:#626262;font-weight:400;transform:scaleX(0.9);transform-origin:0 0;">Conectivo "o"</div>
<svg style="position:absolute;left:640px;top:85px;" width="70" height="45" viewBox="0 0 70 45"><path d="M58.8 10.8 L21 33" stroke="#e8412a" stroke-width="2.3" stroke-linecap="round"/><path d="M14.6 37.1 L20.1 28.8 L24.9 36.3 Z" fill="#e8412a" stroke="#e8412a" stroke-width="1" stroke-linejoin="round"/></svg>
</body></html>
